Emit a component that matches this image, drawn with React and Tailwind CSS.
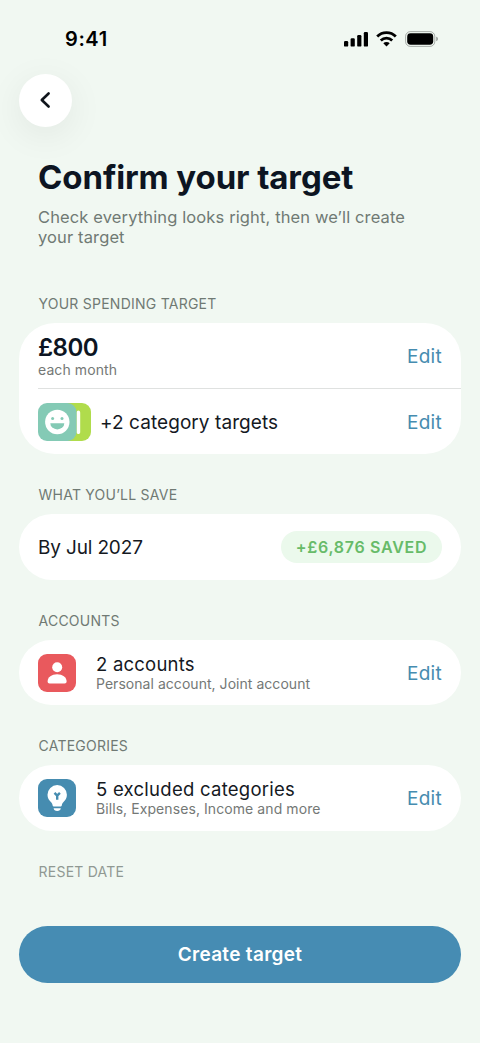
function StatusBar() {
  return (
    <div className="flex h-[74px] shrink-0 items-start justify-between pl-[65px] pr-[41px] pt-[28px]">
      <span className="text-[20px] font-semibold leading-[22px] tracking-[0.6px] text-black">9:41</span>
      <div className="flex items-center pt-[3px]">
        <svg width="24" height="16" viewBox="0 0 24 16" fill="#000">
          <rect x="0" y="10" width="4.2" height="5.6" rx="1.2" />
          <rect x="6.6" y="7.2" width="4.2" height="8.4" rx="1.2" />
          <rect x="13.2" y="4" width="4.2" height="11.6" rx="1.2" />
          <rect x="19.8" y="1" width="4.2" height="14.6" rx="1.2" />
        </svg>
        <svg className="ml-[8px]" width="21" height="16" viewBox="0 0 21 16" fill="none" stroke="#000" strokeWidth="2.8">
          <path d="M1.2 5.500a13.2 13.2 0 0 1 18.6 0" />
          <path d="M4.8 9.400a8.2 8.2 0 0 1 11.4 0" />
          <path d="M10.5 15.6L7.3 12.3a4.6 4.6 0 0 1 6.4 0z" fill="#000" stroke="none" />
        </svg>
        <svg className="ml-[8px]" width="34" height="16" viewBox="0 0 34 16">
          <rect x="0.6" y="0.6" width="29.2" height="14.8" rx="4.8" fill="none" stroke="#000" strokeOpacity="0.3" />
          <rect x="2.2" y="2.3" width="26" height="11.4" rx="3.4" fill="#000" />
          <path d="M31.4 5.8c1.8.6 1.8 3.8 0 4.4z" fill="#000" fillOpacity="0.45" />
        </svg>
      </div>
    </div>
  );
}

function Label({ children, className = "" }) {
  return (
    <h2 className={"pl-[38.5px] text-[14px] font-normal leading-[18px] tracking-[0.24px] text-[#707a74] " + className}>
      {children}
    </h2>
  );
}

function Edit() {
  return <button className="ml-auto pt-[2px] text-[19px] leading-6 tracking-[0.3px] text-[#468cb0]">Edit</button>;
}

function TargetsIcon() {
  return (
    <svg className="mb-[2px] shrink-0" width="53" height="38" viewBox="0 0 53 38">
      <rect x="15" width="38" height="38" rx="9" fill="#b0dc4c" />
      <path d="M38.600 9.500c0-2.800 3.600-2.800 3.600 0v19.500c0 2.800-3.600 2.800-3.600 0z" fill="#fff" />
      <rect width="38.5" height="38" rx="9" fill="#84cab5" />
      <circle cx="19.3" cy="19" r="12.2" fill="#fff" />
      <circle cx="14.6" cy="15.6" r="1.5" fill="#84cab5" />
      <circle cx="24" cy="15.6" r="1.5" fill="#84cab5" />
      <path d="M12.3 20.2h14a7 6.2 0 0 1-14 0z" fill="#84cab5" />
    </svg>
  );
}

function PersonIcon() {
  return (
    <svg className="shrink-0" width="38" height="38" viewBox="0 0 38 38">
      <rect width="38" height="38" rx="9" fill="#e9595d" />
      <circle cx="19.2" cy="13.2" r="5" fill="#fff" />
      <path d="M9.6 27.6c0-4.600 4.200-7.400 9.500-7.400s9.500 2.800 9.500 7.400c0 1.300-.8 2-2 2h-15c-1.200 0-2-.7-2-2z" fill="#fff" />
    </svg>
  );
}

function BulbIcon() {
  return (
    <svg className="shrink-0" width="38" height="38" viewBox="0 0 38 38">
      <rect width="38" height="38" rx="9" fill="#468cb0" />
      <path d="M19.200 6.100a9.700 9.700 0 0 0-9.700 9.700c0 3.300 1.500 5.500 3.400 7.300 1 .9 1.400 1.800 1.600 2.900.2 1 .8 1.500 1.700 1.500h6c.9 0 1.500-.5 1.700-1.500.2-1.100.6-2 1.600-2.900 1.900-1.800 3.400-4 3.400-7.300a9.700 9.700 0 0 0-9.700-9.700z" fill="#fff" />
      <path d="M15.600 29.200h7.200c-.3 1.700-1.400 2.700-3.600 2.700s-3.300-1-3.600-2.700z" fill="#fff" />
      <path d="M16.500 13.900l2.700 2.700 2.700-2.700M19.200 16.600v4.200" fill="none" stroke="#468cb0" strokeWidth="2.400" strokeLinejoin="round" />
    </svg>
  );
}

export default function App() {
  return (
    <main className="flex h-[1043px] w-[480px] flex-col overflow-hidden bg-[#f1f8f2] font-['Inter','Liberation_Sans',sans-serif]">
      <StatusBar />
      <button
        aria-label="Back"
        className="ml-[19px] flex size-[53px] shrink-0 items-center justify-center rounded-full bg-white pb-[1px] pr-[2px] shadow-[0_8px_36px_rgba(0,0,0,0.07)]"
      >
        <svg width="12" height="18" viewBox="0 0 12 18" fill="none" stroke="#10151c" strokeWidth="2.600" strokeLinecap="round" strokeLinejoin="round">
          <path d="M9.600 2.500L2.800 9l6.800 6.500" />
        </svg>
      </button>

      <h1 className="mt-[30px] whitespace-nowrap pl-[38px] text-[33px] font-bold leading-[40px] tracking-[-0.1px] text-[#0d1522]">
        Confirm your target
      </h1>
      <p className="mt-[10px] whitespace-nowrap pl-[38px] text-[16.500px] leading-[20px] tracking-[0.125px] text-[#707a74]">
        Check everything looks right, then we’ll create
        <br />
        your target
      </p>

      <Label className="mt-[48px]">YOUR SPENDING TARGET</Label>
      <section className="mx-[19px] mt-[10px] h-[131px] shrink-0 rounded-[36px] bg-white">
        <div className="ml-[19px] flex h-[66px] items-center border-b border-[#dfe1e0] pr-[19px]">
          <div className="pt-[2px]">
            <div className="text-[24px] font-semibold leading-[26px] tracking-[-0.5px] text-[#0d1522]">£800</div>
            <div className="text-[14px] leading-[18px] tracking-[0.1px] text-[#747876]">each month</div>
          </div>
          <Edit />
        </div>
        <div className="flex h-[65px] items-center px-[19px] pt-[2px]">
          <TargetsIcon />
          <span className="ml-[9px] whitespace-nowrap text-[19px] leading-6 tracking-[0.07px] text-[#15191f]">
            +2 category targets
          </span>
          <button className="ml-auto text-[19px] leading-6 tracking-[0.3px] text-[#468cb0]">Edit</button>
        </div>
      </section>

      <Label className="mt-[32px]">WHAT YOU’LL SAVE</Label>
      <section className="mx-[19px] mt-[10px] flex h-[66px] shrink-0 items-center rounded-[33px] bg-white px-[19px]">
        <span className="pt-[2px] text-[19px] leading-6 tracking-[-0.15px] text-[#15191f]">By Jul 2027</span>
        <span className="ml-auto flex h-[32px] w-[161px] items-center justify-center whitespace-nowrap rounded-full bg-[#ebf9ec] pb-[1px] text-[16px] font-semibold tracking-[0.7px] text-[#67bb69]">
          +£6,876 SAVED
        </span>
      </section>

      <Label className="mt-[32px]">ACCOUNTS</Label>
      <section className="mx-[19px] mt-[10px] flex h-[65px] shrink-0 items-center rounded-[33px] bg-white px-[19px]">
        <PersonIcon />
        <div className="ml-[20px] whitespace-nowrap">
          <div className="text-[18.500px] leading-[22px] tracking-[0.22px] text-[#15191f]">2 accounts</div>
          <div className="text-[14px] leading-[18px] tracking-[0.04px] text-[#747876]">Personal account, Joint account</div>
        </div>
        <Edit />
      </section>

      <Label className="mt-[32px]">CATEGORIES</Label>
      <section className="mx-[19px] mt-[10px] flex h-[66px] shrink-0 items-center rounded-[33px] bg-white px-[19px]">
        <BulbIcon />
        <div className="ml-[20px] whitespace-nowrap">
          <div className="text-[18.500px] leading-[22px] tracking-[0.26px] text-[#15191f]">5 excluded categories</div>
          <div className="text-[14px] leading-[18px] tracking-[0.08px] text-[#747876]">Bills, Expenses, Income and more</div>
        </div>
        <Edit />
      </section>

      <Label className="mt-[32px] opacity-75">RESET DATE</Label>
      <button className="mx-[19px] mt-[45px] h-[57px] shrink-0 rounded-full bg-[#468cb3] pt-[2px] text-[19px] font-semibold tracking-[0.3px] text-white">
        Create target
      </button>
    </main>
  );
}
